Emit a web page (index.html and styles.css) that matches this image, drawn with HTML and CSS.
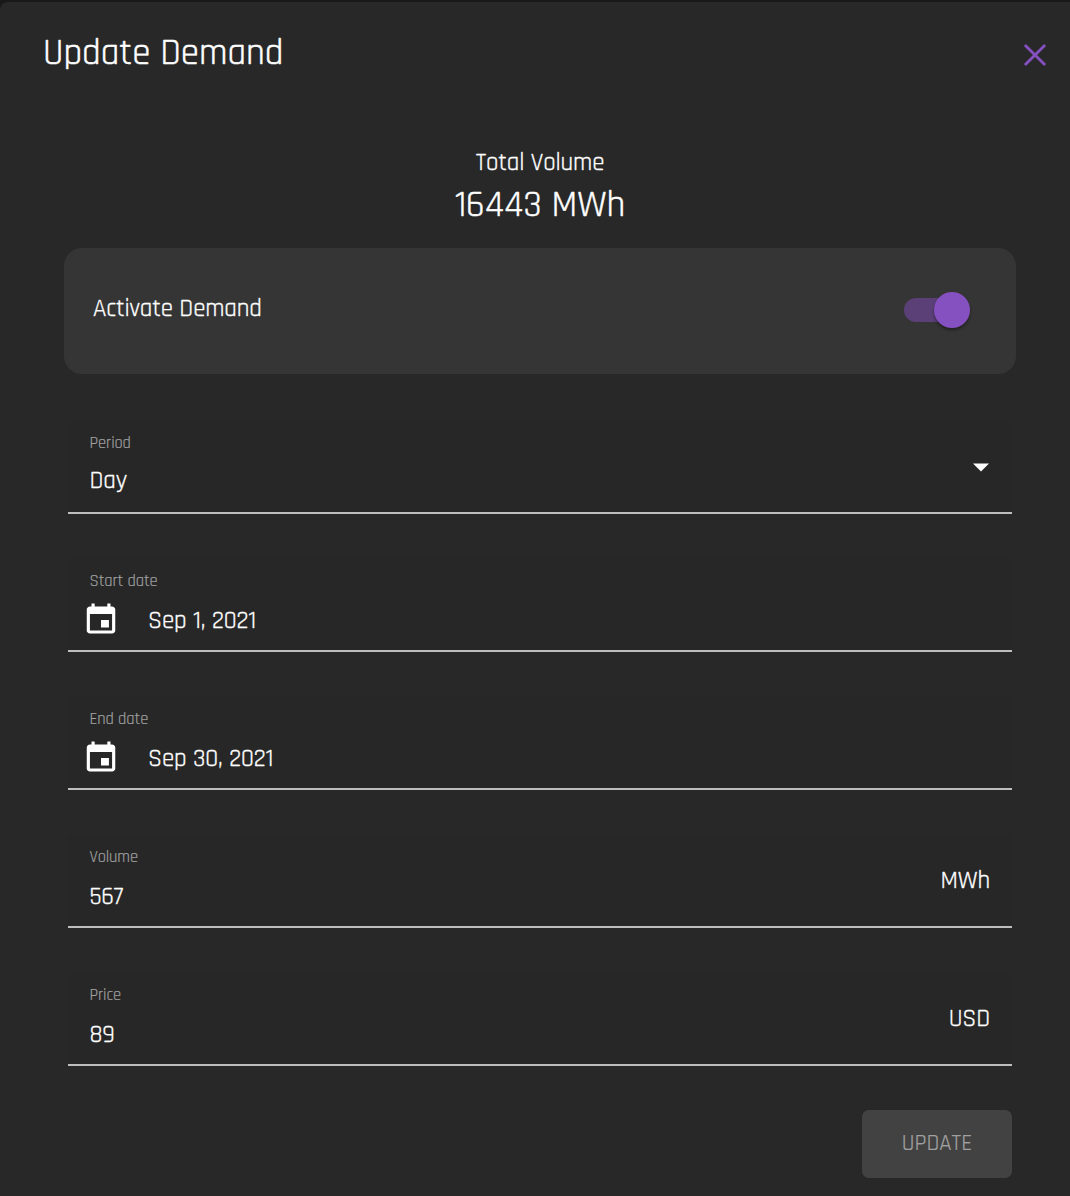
FILE: index.html
```html
<!DOCTYPE html>
<html lang="en">
<head>
<meta charset="utf-8">
<title>Update Demand</title>
<link rel="stylesheet" href="styles.css">
</head>
<body>
<main class="dialog">
  <header class="dialog-header">
    <h1 class="title">Update Demand</h1>
    <button class="close" aria-label="Close"><svg width="24" height="24" viewBox="0 0 24 24"><path d="M1.9 1.9 22.1 22.1M22.1 1.9 1.9 22.1"/></svg></button>
  </header>
  <section class="total">
    <span class="total-label">Total Volume</span>
    <span class="total-value">16443 MWh</span>
  </section>
  <section class="activate">
    <span class="activate-label">Activate Demand</span>
    <span class="switch" role="switch" aria-checked="true"><span class="thumb"></span></span>
  </section>
  <form class="fields">
    <div class="field period">
      <div class="content"><span class="label">Period</span><span class="value">Day</span></div>
      <svg class="arrow" width="16" height="9" viewBox="0 0 16 9"><path d="M0 .5h16L8 8.5z"/></svg>
    </div>
    <div class="field">
      <div class="content"><span class="label">Start date</span>
        <div class="date"><svg class="calendar" width="38" height="36" viewBox="0 0 24 24" preserveAspectRatio="none"><path d="M17 12h-5v5h5v-5zM16 1v2H8V1H6v2H5c-1.11 0-1.99.9-1.99 2L3 19c0 1.1.89 2 2 2h14c1.1 0 2-.9 2-2V5c0-1.1-.9-2-2-2h-1V1h-2zm3 18H5V8h14v11z"/></svg><span class="value">Sep 1, 2021</span></div>
      </div>
    </div>
    <div class="field">
      <div class="content"><span class="label">End date</span>
        <div class="date"><svg class="calendar" width="38" height="36" viewBox="0 0 24 24" preserveAspectRatio="none"><path d="M17 12h-5v5h5v-5zM16 1v2H8V1H6v2H5c-1.11 0-1.99.9-1.99 2L3 19c0 1.1.89 2 2 2h14c1.1 0 2-.9 2-2V5c0-1.1-.9-2-2-2h-1V1h-2zm3 18H5V8h14v11z"/></svg><span class="value">Sep 30, 2021</span></div>
      </div>
    </div>
    <div class="field">
      <div class="content"><span class="label">Volume</span><span class="value">567</span></div>
      <span class="unit">MWh</span>
    </div>
    <div class="field">
      <div class="content"><span class="label">Price</span><span class="value">89</span></div>
      <span class="unit">USD</span>
    </div>
    <button class="update" type="button" disabled>UPDATE</button>
  </form>
</main>
</body>
</html>
```
FILE: styles.css
```css
* { box-sizing: border-box; }
body {
  margin: 0;
  padding-top: 2px;
  background: #191919;
  color: #fff;
  font-family: Rajdhani, Roboto, sans-serif;
  font-weight: 400;
  -webkit-text-stroke: .3px currentColor;
}
button { border: 0; padding: 0; font-family: inherit; }
.dialog {
  height: 1194px;
  border-radius: 8px 0 0 0;
  background: #282828;
  overflow: hidden;
}
.dialog-header {
  display: flex;
  justify-content: space-between;
  height: 138px;
  padding: 30px 23px 0 43px;
}
.title { margin: 0; font-size: 37px; line-height: 43px; font-weight: 400; -webkit-text-stroke-width: .45px; }
.close { width: 24px; height: 24px; margin-top: 11px; background: none; }
.close svg { display: block; fill: none; stroke: #8550c0; stroke-width: 2.8; }
.total {
  display: flex;
  flex-direction: column;
  align-items: center;
  height: 108px;
  padding-top: 9px;
  white-space: nowrap;
}
.total > span { margin-left: 10px; }
.total-label { font-size: 25px; line-height: 28px; letter-spacing: -.15px; }
.total > .total-value { font-size: 37px; line-height: 40px; margin-top: 9px; -webkit-text-stroke-width: .45px; }
.activate {
  display: flex;
  justify-content: space-between;
  align-items: center;
  height: 126px;
  margin: 0 54px 0 64px;
  padding: 0 46px 0 29px;
  border-radius: 18px;
  background: #353535;
}
.activate-label { font-size: 25px; line-height: 28px; letter-spacing: -.15px; margin-bottom: 4px; }
.switch {
  display: flex;
  justify-content: flex-end;
  align-items: center;
  width: 66px;
  height: 24px;
  margin-bottom: 2px;
  border-radius: 12px;
  background: #5b4078;
}
.thumb {
  width: 36px;
  height: 36px;
  border-radius: 50%;
  background: #8551c0;
  box-shadow: 0 2px 3px rgba(0, 0, 0, .4);
}
.fields { display: flex; flex-direction: column; gap: 44px; padding: 46px 58px 0 68px; }
.field {
  display: flex;
  justify-content: space-between;
  height: 94px;
  padding: 0 22px 0 21.5px;
  border-bottom: 2px solid #bebebe;
  border-radius: 8px 8px 0 0;
  background: #272727;
}
.content { display: flex; flex-direction: column; padding-top: 14px; }
.label { color: #a0a0a0; font-size: 16.5px; line-height: 20px; letter-spacing: -.1px; white-space: nowrap; -webkit-text-stroke-width: .2px; }
.value { font-size: 25px; line-height: 28px; letter-spacing: -.15px; margin-top: 15px; white-space: nowrap; }
.period .value { margin-top: 13px; }
.date { display: flex; margin-left: -7.5px; }
.date .value { margin-left: 28px; }
.calendar { fill: #fff; margin-top: 10px; }
.arrow { fill: #fff; margin: 43px 1px 0 0; }
.unit { font-size: 25px; line-height: 28px; letter-spacing: -.15px; margin-top: 33px; }
.update {
  align-self: flex-end;
  width: 150px;
  height: 68px;
  padding-bottom: 1px;
  border-radius: 7px;
  background: #424242;
  color: #a0a0a0;
  font-size: 23px;
  font-weight: 400;
  -webkit-text-stroke: .2px #a0a0a0;
}
```
